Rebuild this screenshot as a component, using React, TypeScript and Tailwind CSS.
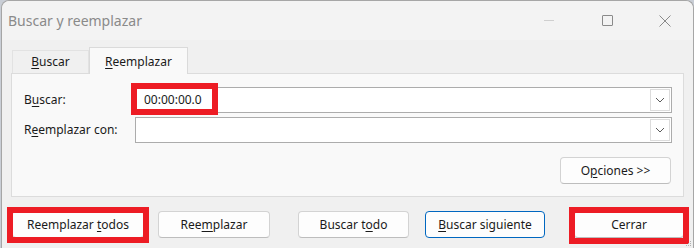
import { ReactNode } from 'react';

function Key({ children }: { children: ReactNode }) {
  return <span className="underline underline-offset-[2px] decoration-[1px]">{children}</span>;
}

function RedMark({ className }: { className: string }) {
  return <div className={`pointer-events-none absolute border-[6px] border-[#ed1c24] ${className}`} />;
}

function Button({
  children,
  className = '',
  primary = false,
}: {
  children: ReactNode;
  className?: string;
  primary?: boolean;
}) {
  return (
    <div
      className={`flex h-[27px] items-center justify-center rounded-[4px] border bg-[#fdfdfd] text-[12px] text-[#1a1a1a] ${
        primary ? 'border-[#0067c0]' : 'border-[#d3d3d3] border-b-[#bdbdbd]'
      } ${className}`}
    >
      <span>{children}</span>
    </div>
  );
}

function Combo({ value, children }: { value?: string; children?: ReactNode }) {
  return (
    <div className="relative flex h-[26px] flex-1 items-stretch border border-[#acacac] bg-white">
      <div className="flex flex-1 items-center pl-[8px] text-[12px] text-[#1a1a1a]">{value}</div>
      <div className="my-px mr-px flex w-[20px] items-center justify-center border border-[#dcdcdc] bg-white">
        <svg width="10" height="6" viewBox="0 0 10 6" fill="none">
          <path d="M1 1 L5 5 L9 1" stroke="#5a5a5a" strokeWidth="1" />
        </svg>
      </div>
      {children}
    </div>
  );
}

export default function App() {
  return (
    <div className="flex h-[248px] w-[694px] overflow-hidden bg-[#c9ced6] font-['Noto_Sans',sans-serif]">
      <div className="w-px shrink-0" />
      <div className="relative flex flex-1 flex-col rounded-t-[8px] border-x border-t border-[#a6a6a6] bg-[#f0f0f0]">
        {/* title bar */}
        <div className="flex h-[39px] items-center rounded-t-[8px] bg-[#f3f3f3]">
          <div className="flex-1 pl-[6px] text-[14px] text-[#8a8a8a]">Buscar y reemplazar</div>
          <div className="flex h-full">
            <div className="flex w-[58px] items-center justify-center">
              <div className="h-px w-[10px] bg-[#cfcfcf]" />
            </div>
            <div className="flex w-[58px] items-center justify-center">
              <div className="h-[11px] w-[11px] rounded-[1px] border border-[#8a8a8a]" />
            </div>
            <div className="flex w-[57px] items-center justify-center">
              <svg width="12" height="12" viewBox="0 0 12 12" fill="none">
                <path d="M0.5 0.5 L11.5 11.5 M11.5 0.5 L0.5 11.5" stroke="#8a8a8a" strokeWidth="1" />
              </svg>
            </div>
          </div>
        </div>

        {/* tabs */}
        <div className="mt-[7px] flex items-end pl-[10px] text-[12px] leading-[16px] text-[#1a1a1a]">
          <div className="flex h-[23px] w-[77px] items-end justify-center border border-b-0 border-[#e2e2e2] bg-[#f0f0f0] pb-[3px]">
            <span>
              <Key>B</Key>uscar
            </span>
          </div>
          <div className="relative z-10 -mb-px flex h-[27px] w-[99px] items-end justify-center border border-b-0 border-[#dadada] bg-[#f9f9f9] pb-[4px]">
            <span>
              <Key>R</Key>eemplazar
            </span>
          </div>
        </div>

        {/* panel */}
        <div className="mx-[9px] flex flex-col border border-[#dcdcdc] bg-[#f9f9f9] pb-[12px] pl-[12px] pr-[11px] pt-[13px] text-[12px] text-[#1a1a1a]">
          <div className="flex items-center">
            <div className="w-[111px]">
              B<Key>u</Key>scar:
            </div>
            <Combo value="00:00:00.0">
              <RedMark className="-left-[5px] -top-[5px] -bottom-[3px] w-[87px]" />
            </Combo>
          </div>
          <div className="mt-[4px] flex items-center">
            <div className="w-[111px]">
              R<Key>e</Key>emplazar con:
            </div>
            <Combo />
          </div>
          <div className="mt-[14px] flex justify-end pr-px">
            <Button className="w-[111px]">
              O<Key>p</Key>ciones &gt;&gt;
            </Button>
          </div>
        </div>

        {/* bottom buttons */}
        <div className="mt-[14px] flex pl-[10px]">
          <div className="relative">
            <Button className="w-[132px]">
              Reemplazar <Key>t</Key>odos
            </Button>
            <RedMark className="-left-[5px] -top-[4px] -right-[5px] -bottom-[5px]" />
          </div>
          <Button className="ml-[14px] w-[112px]">
            Ree<Key>m</Key>plazar
          </Button>
          <Button className="ml-[28px] w-[111px]">
            Buscar t<Key>o</Key>do
          </Button>
          <Button primary className="ml-[16px] w-[120px]">
            <Key>B</Key>uscar siguiente
          </Button>
          <div className="relative ml-[29px]">
            <Button className="w-[110px]">Cerrar</Button>
            <RedMark className="-left-[5px] -top-[4px] -right-[5px] -bottom-[6px]" />
          </div>
        </div>

        {/* resize grip */}
        <svg className="absolute bottom-[1px] right-[1px]" width="6" height="6" viewBox="0 0 6 6">
          <rect x="4" y="0" width="1" height="1" fill="#b0b0b0" />
          <rect x="2" y="2" width="1" height="1" fill="#b0b0b0" />
          <rect x="4" y="2" width="1" height="1" fill="#b0b0b0" />
          <rect x="0" y="4" width="1" height="1" fill="#b0b0b0" />
          <rect x="2" y="4" width="1" height="1" fill="#b0b0b0" />
          <rect x="4" y="4" width="1" height="1" fill="#b0b0b0" />
        </svg>
      </div>
    </div>
  );
}
